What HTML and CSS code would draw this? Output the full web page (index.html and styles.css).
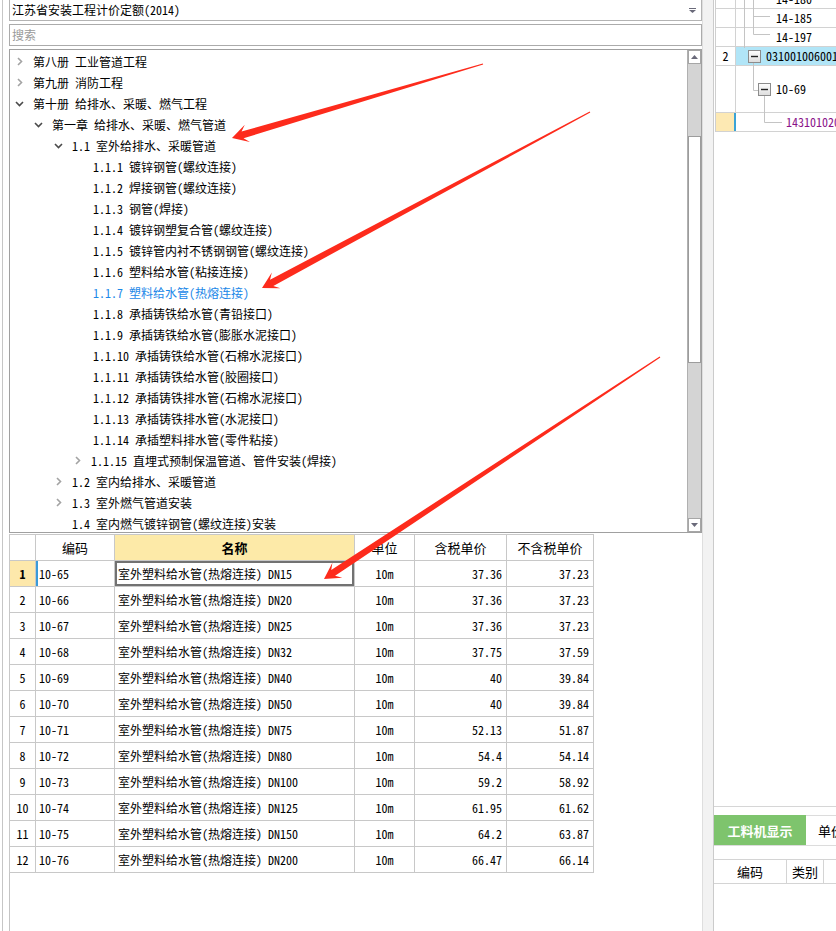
FILE: index.html
```html
<!DOCTYPE html>
<html lang="zh-CN">
<head>
<meta charset="utf-8">
<title>定额树</title>
<link rel="stylesheet" href="styles.css">
</head>
<body>
<div class="app">
  <div class="left">
    <div class="combo">
      <span>江苏省安装工程计价定额(2014)</span>
      <svg class="combo-arrow" width="7" height="5" viewBox="0 0 7 5"><rect x="0" y="0" width="7" height="1" fill="#6a6a7a"/><polygon points="0,2 7,2 3.5,5" fill="#6a6a7a"/></svg>
    </div>
    <div class="search">搜索</div>
    <div class="tree">
      <div class="tree-list">
        <div class="row l0"><span class="chev"><svg width="9" height="9" viewBox="0 0 9 9"><path d="M3 1 L6.5 4.5 L3 8" class="c-closed"/></svg></span><span class="txt">第八册 工业管道工程</span></div>
        <div class="row l0"><span class="chev"><svg width="9" height="9" viewBox="0 0 9 9"><path d="M3 1 L6.5 4.5 L3 8" class="c-closed"/></svg></span><span class="txt">第九册 消防工程</span></div>
        <div class="row l0"><span class="chev"><svg width="9" height="9" viewBox="0 0 9 9"><path d="M1 3 L4.5 6.5 L8 3" class="c-open"/></svg></span><span class="txt">第十册 给排水、采暖、燃气工程</span></div>
        <div class="row l1"><span class="chev"><svg width="9" height="9" viewBox="0 0 9 9"><path d="M1 3 L4.5 6.5 L8 3" class="c-open"/></svg></span><span class="txt">第一章 给排水、采暖、燃气管道</span></div>
        <div class="row l2"><span class="chev"><svg width="9" height="9" viewBox="0 0 9 9"><path d="M1 3 L4.5 6.5 L8 3" class="c-open"/></svg></span><span class="txt">1.1 室外给排水、采暖管道</span></div>
        <div class="row l3"><span class="chev"></span><span class="txt">1.1.1 镀锌钢管(螺纹连接)</span></div>
        <div class="row l3"><span class="chev"></span><span class="txt">1.1.2 焊接钢管(螺纹连接)</span></div>
        <div class="row l3"><span class="chev"></span><span class="txt">1.1.3 钢管(焊接)</span></div>
        <div class="row l3"><span class="chev"></span><span class="txt">1.1.4 镀锌钢塑复合管(螺纹连接)</span></div>
        <div class="row l3"><span class="chev"></span><span class="txt">1.1.5 镀锌管内衬不锈钢钢管(螺纹连接)</span></div>
        <div class="row l3"><span class="chev"></span><span class="txt">1.1.6 塑料给水管(粘接连接)</span></div>
        <div class="row l3 active"><span class="chev"></span><span class="txt">1.1.7 塑料给水管(热熔连接)</span></div>
        <div class="row l3"><span class="chev"></span><span class="txt">1.1.8 承插铸铁给水管(青铅接口)</span></div>
        <div class="row l3"><span class="chev"></span><span class="txt">1.1.9 承插铸铁给水管(膨胀水泥接口)</span></div>
        <div class="row l3"><span class="chev"></span><span class="txt">1.1.10 承插铸铁给水管(石棉水泥接口)</span></div>
        <div class="row l3"><span class="chev"></span><span class="txt">1.1.11 承插铸铁给水管(胶圈接口)</span></div>
        <div class="row l3"><span class="chev"></span><span class="txt">1.1.12 承插铸铁排水管(石棉水泥接口)</span></div>
        <div class="row l3"><span class="chev"></span><span class="txt">1.1.13 承插铸铁排水管(水泥接口)</span></div>
        <div class="row l3"><span class="chev"></span><span class="txt">1.1.14 承插塑料排水管(零件粘接)</span></div>
        <div class="row l3x"><span class="chev"><svg width="9" height="9" viewBox="0 0 9 9"><path d="M3 1 L6.5 4.5 L3 8" class="c-closed"/></svg></span><span class="txt">1.1.15 直埋式预制保温管道、管件安装(焊接)</span></div>
        <div class="row l2"><span class="chev"><svg width="9" height="9" viewBox="0 0 9 9"><path d="M3 1 L6.5 4.5 L3 8" class="c-closed"/></svg></span><span class="txt">1.2 室内给排水、采暖管道</span></div>
        <div class="row l2"><span class="chev"><svg width="9" height="9" viewBox="0 0 9 9"><path d="M3 1 L6.5 4.5 L3 8" class="c-closed"/></svg></span><span class="txt">1.3 室外燃气管道安装</span></div>
        <div class="row l2"><span class="chev"></span><span class="txt">1.4 室内燃气镀锌钢管(螺纹连接)安装</span></div>
      </div>
      <div class="sb">
        <div class="sb-btn"><svg width="7" height="4" viewBox="0 0 7 4"><polygon points="0,4 7,4 3.5,0" fill="#6a6a7a"/></svg></div>
        <div class="sb-track t1"></div>
        <div class="sb-thumb"></div>
        <div class="sb-track t2"></div>
        <div class="sb-btn"><svg width="7" height="4" viewBox="0 0 7 4"><polygon points="0,0 7,0 3.5,4" fill="#6a6a7a"/></svg></div>
      </div>
    </div>
    <div class="grid-wrap">
      <table class="grid">
        <colgroup><col class="w-num"><col class="w-code"><col class="w-name"><col class="w-unit"><col class="w-p1"><col class="w-p2"></colgroup>
        <thead>
          <tr><th></th><th>编码</th><th class="hl">名称</th><th>单位</th><th>含税单价</th><th>不含税单价</th></tr>
        </thead>
        <tbody>
          <tr><td class="num sel">1</td><td class="code cur">10-65</td><td class="name focus">室外塑料给水管(热熔连接) DN15</td><td class="unit">10m</td><td class="pr">37.36</td><td class="pr">37.23</td></tr>
          <tr><td class="num">2</td><td class="code">10-66</td><td class="name">室外塑料给水管(热熔连接) DN20</td><td class="unit">10m</td><td class="pr">37.36</td><td class="pr">37.23</td></tr>
          <tr><td class="num">3</td><td class="code">10-67</td><td class="name">室外塑料给水管(热熔连接) DN25</td><td class="unit">10m</td><td class="pr">37.36</td><td class="pr">37.23</td></tr>
          <tr><td class="num">4</td><td class="code">10-68</td><td class="name">室外塑料给水管(热熔连接) DN32</td><td class="unit">10m</td><td class="pr">37.75</td><td class="pr">37.59</td></tr>
          <tr><td class="num">5</td><td class="code">10-69</td><td class="name">室外塑料给水管(热熔连接) DN40</td><td class="unit">10m</td><td class="pr">40</td><td class="pr">39.84</td></tr>
          <tr><td class="num">6</td><td class="code">10-70</td><td class="name">室外塑料给水管(热熔连接) DN50</td><td class="unit">10m</td><td class="pr">40</td><td class="pr">39.84</td></tr>
          <tr><td class="num">7</td><td class="code">10-71</td><td class="name">室外塑料给水管(热熔连接) DN75</td><td class="unit">10m</td><td class="pr">52.13</td><td class="pr">51.87</td></tr>
          <tr><td class="num">8</td><td class="code">10-72</td><td class="name">室外塑料给水管(热熔连接) DN80</td><td class="unit">10m</td><td class="pr">54.4</td><td class="pr">54.14</td></tr>
          <tr><td class="num">9</td><td class="code">10-73</td><td class="name">室外塑料给水管(热熔连接) DN100</td><td class="unit">10m</td><td class="pr">59.2</td><td class="pr">58.92</td></tr>
          <tr><td class="num">10</td><td class="code">10-74</td><td class="name">室外塑料给水管(热熔连接) DN125</td><td class="unit">10m</td><td class="pr">61.95</td><td class="pr">61.62</td></tr>
          <tr><td class="num">11</td><td class="code">10-75</td><td class="name">室外塑料给水管(热熔连接) DN150</td><td class="unit">10m</td><td class="pr">64.2</td><td class="pr">63.87</td></tr>
          <tr><td class="num">12</td><td class="code">10-76</td><td class="name">室外塑料给水管(热熔连接) DN200</td><td class="unit">10m</td><td class="pr">66.47</td><td class="pr">66.14</td></tr>
        </tbody>
      </table>
    </div>
  </div>
  <div class="split"></div>
  <div class="right">
    <div class="rgrid">
      <div class="rrow"><div class="rn"></div><div class="rc p40">14-180</div></div>
      <div class="rrow"><div class="rn"></div><div class="rc p40">14-185</div></div>
      <div class="rrow"><div class="rn"></div><div class="rc p40">14-197</div></div>
      <div class="rrow"><div class="rn">2</div><div class="rc p30 blue">031001006001</div></div>
      <div class="rrow tall"><div class="rn"></div><div class="rc p40">10-69</div></div>
      <div class="rrow"><div class="rn yel"></div><div class="rc p50 purple">143101020001</div></div>
      <svg class="tree-lines" width="122" height="145" viewBox="0 0 122 145">
        <g stroke="#c4c4c4" stroke-width="1" fill="none">
          <path d="M29.5 0 V58"/>
          <path d="M38.5 0 V44.5 M38.5 26.5 H55 M38.5 44.5 H55"/>
          <path d="M38.5 73 V100.5 H43"/>
          <path d="M49.5 106 V132.5 H67"/>
        </g>
        <defs>
          <linearGradient id="mb" x1="0" y1="0" x2="0" y2="1"><stop offset="0" stop-color="#ffffff"/><stop offset="1" stop-color="#dcdcdc"/></linearGradient>
        </defs>
        <rect x="33.5" y="60.5" width="12" height="12" fill="url(#mb)" stroke="#8c8c8c"/>
        <path d="M36 66.5 H43" stroke="#222" stroke-width="1.4"/>
        <rect x="43.5" y="93.5" width="12" height="12" fill="url(#mb)" stroke="#8c8c8c"/>
        <path d="M46 99.5 H53" stroke="#222" stroke-width="1.4"/>
      </svg>
    </div>
    <div class="rspace"></div>
    <div class="rbottom">
      <div class="tabs">
        <div class="tab on">工料机显示</div>
        <div class="tab">单价构成</div>
      </div>
      <div class="rhead">
        <div class="rh c1">编码</div>
        <div class="rh c2">类别</div>
        <div class="rh c3">名称</div>
      </div>
    </div>
  </div>
</div>
<svg class="arrows" width="836" height="931" viewBox="0 0 836 931">
  <polygon points="482.83,63.42 241.56,131.53 244.79,124.84 232,138 249.89,142.10 243.54,138.25 483.17,64.58"/>
  <polygon points="589.72,111.47 270.03,279.72 271.84,272.50 262,288 280.36,288.36 273.35,285.88 590.28,112.53"/>
  <polygon points="659.67,356.50 331.24,570.02 332.38,562.67 324,579 342.30,577.69 335.10,575.86 660.33,357.50"/>
</svg>
</body>
</html>
```

FILE: styles.css
```css
* { box-sizing: border-box; }

body {
  margin: 0;
  width: 836px;
  height: 931px;
  overflow: hidden;
  position: relative;
  background: #fff;
  color: #000;
  font-family: "Noto Sans Mono CJK SC", "Noto Sans CJK SC", monospace;
  font-size: 12px;
  line-height: 1;
}

.app {
  display: flex;
  height: 931px;
}

/* ---------- left panel ---------- */
.left {
  width: 700px;
  margin-left: 2px;
  border-left: 1px solid #c6c6c6;
  padding-left: 6px;
  display: flex;
  flex-direction: column;
  flex-shrink: 0;
}

.combo {
  height: 22px;
  margin-top: -1px;
  border: 1px solid #b4b4b4;
  padding: 0 5px 0 2px;
  display: flex;
  align-items: center;
  justify-content: space-between;
  white-space: pre;
}

.search {
  height: 22px;
  margin-top: 3px;
  border: 1px solid #ababab;
  padding-left: 2px;
  display: flex;
  align-items: center;
  color: #9a9a9a;
}

.tree {
  height: 484px;
  margin-top: 3px;
  border: 1px solid #a0a0a0;
  display: flex;
}

.tree-list {
  flex: 1;
  overflow: hidden;
  padding-top: 1px;
}

.row {
  height: 21px;
  display: flex;
  align-items: center;
  white-space: pre;
}
.l0 { padding-left: 0; }
.l1 { padding-left: 19px; }
.l2 { padding-left: 39px; }
.l3, .l3x { padding-left: 60px; }
.l3x .chev { margin-left: -2px; }

.chev {
  width: 23px;
  flex-shrink: 0;
  display: flex;
  align-items: center;
  padding-left: 5px;
}
.c-closed { fill: none; stroke: #a3a3a3; stroke-width: 1.6; }
.c-open { fill: none; stroke: #4a4a4a; stroke-width: 1.6; }

.row.active .txt { color: #1b88e8; }

/* scrollbar */
.sb {
  width: 14px;
  flex-shrink: 0;
  display: flex;
  flex-direction: column;
  background: #d4d4d4;
  border-left: 1px solid #b0b0b0;
}
.sb-btn {
  height: 14px;
  background: #fff;
  border: 1px solid #a6a6a6;
  display: flex;
  align-items: center;
  justify-content: center;
}
.sb-track.t1 { height: 72px; }
.sb-thumb {
  height: 227px;
  background: #fff;
  border: 1px solid #9c9c9c;
}
.sb-track.t2 { flex: 1; }

/* price grid */
.grid-wrap {
  flex: 1;
  margin-top: 1px;
  border-left: 1px solid #c4c4c4;
}

.grid {
  margin-left: -1px;
  width: 584px;
  table-layout: fixed;
  border-collapse: collapse;
}
.w-num { width: 26px; }
.w-code { width: 79px; }
.w-name { width: 240px; }
.w-unit { width: 60px; }
.w-p1 { width: 92px; }
.w-p2 { width: 87px; }

.grid tr { height: 26px; }
.grid th,
.grid td {
  border: 1px solid #c8c8c8;
  padding: 0 3px;
  white-space: pre;
  overflow: hidden;
  font-weight: normal;
}
.grid th {
  text-align: center;
  font-family: "Noto Sans CJK SC", sans-serif;
  font-size: 13px;
}
.grid th.hl {
  background: #fdeaa8;
  font-weight: bold;
}
.grid td.num { text-align: center; padding: 0; }
.grid td.num.sel {
  background: #fde8ab;
  font-weight: bold;
}
.grid td.cur { box-shadow: inset 2px 0 0 #3a9bd8; }
.grid td.focus { box-shadow: inset 0 0 0 2px #727272; }
.grid td.unit { text-align: center; }
.grid td.pr { text-align: right; padding-right: 4px; }

/* ---------- splitter ---------- */
.split {
  width: 12px;
  flex-shrink: 0;
  background: #f2f2f2;
  border-left: 1px solid #dedede;
  border-right: 1px solid #cbcbcb;
}

/* ---------- right panel ---------- */
.right {
  flex: 1;
  min-width: 0;
  overflow: hidden;
  display: flex;
  flex-direction: column;
}

.rgrid {
  position: relative;
  margin-top: -10px;
  margin-left: 1px;
  border-left: 1px solid #cfcfcf;
  width: 140px;
}

.rrow {
  height: 19px;
  display: flex;
  border-bottom: 1px solid #d2d2d2;
}
.rrow.tall { height: 47px; }

.rn {
  width: 20px;
  flex-shrink: 0;
  border-right: 1px solid #d2d2d2;
  display: flex;
  align-items: center;
  justify-content: center;
}
.rn.yel {
  background: #fde9b3;
  border-right: 2px solid #3aa3d6;
}

.rc {
  flex: 1;
  display: flex;
  align-items: center;
  white-space: pre;
}
.p30 { padding-left: 30px; }
.p40 { padding-left: 40px; }
.p50 { padding-left: 50px; }
.rc.blue { background: #b1e5f7; }
.rc.purple { color: #8a1289; }

.tree-lines {
  position: absolute;
  left: -1px;
  top: 0;
}

.rspace { flex: 1; }

.rbottom {
  height: 125px;
  flex-shrink: 0;
  border-top: 1px solid #d6d6d6;
  padding-top: 8px;
}

.tabs {
  display: flex;
  height: 31px;
  border-bottom: 1px solid #dcdcdc;
}
.tab {
  display: flex;
  align-items: center;
  padding-left: 12px;
  white-space: nowrap;
  font-family: "Noto Sans CJK SC", sans-serif;
  font-size: 13px;
  border-top: 1px solid #dcdcdc;
}
.tab.on {
  width: 92px;
  flex-shrink: 0;
  justify-content: center;
  padding-left: 0;
  background: #7ec46d;
  border-top: none;
  color: #fff;
  font-weight: bold;
}

.rhead {
  display: flex;
  height: 25px;
  margin-top: 13px;
  border-top: 1px solid #d4d4d4;
  border-bottom: 1px solid #d4d4d4;
}
.rh {
  display: flex;
  align-items: center;
  justify-content: center;
  flex-shrink: 0;
  font-family: "Noto Sans CJK SC", sans-serif;
  font-size: 13px;
  border-right: 1px solid #d4d4d4;
}
.rh.c1 { width: 73px; }
.rh.c2 { width: 37px; }
.rh.c3 { width: 60px; }

/* ---------- annotation arrows ---------- */
.arrows {
  position: absolute;
  left: 0;
  top: 0;
  pointer-events: none;
}
.arrows polygon { fill: #fd2b1c; }
```
